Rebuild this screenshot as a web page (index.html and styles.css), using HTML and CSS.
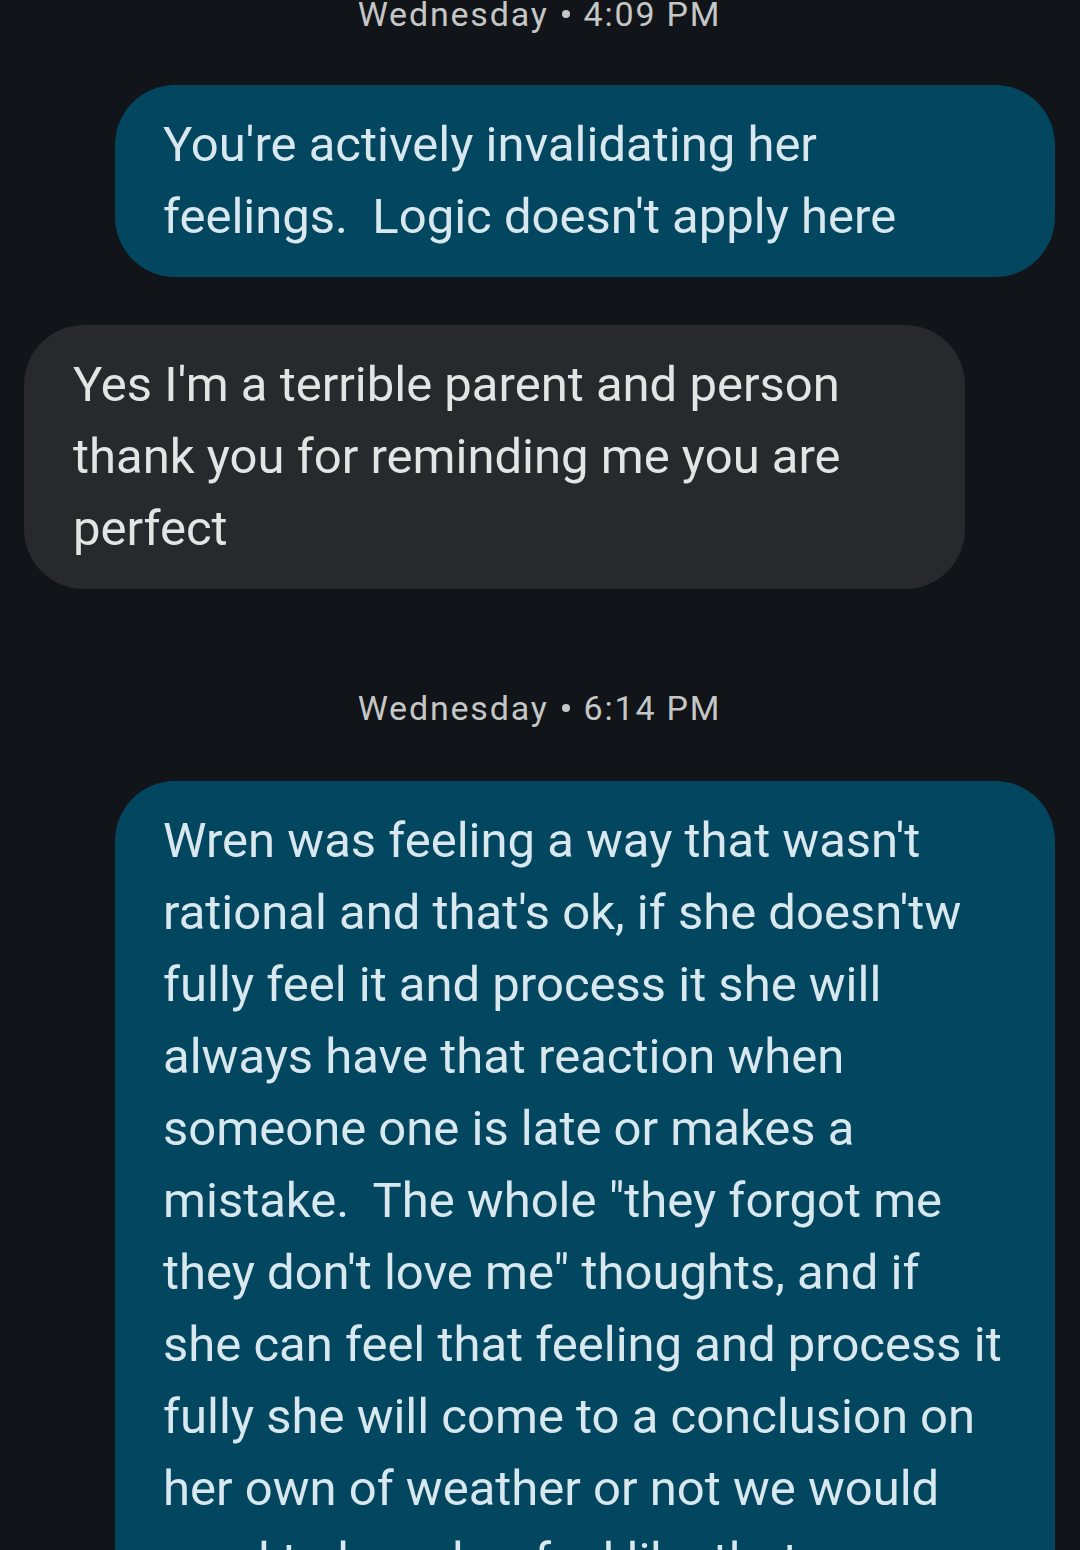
FILE: index.html
```html
<!DOCTYPE html>
<html lang="en">
<head>
<meta charset="utf-8">
<title>Messages</title>
<link rel="stylesheet" href="styles.css">
</head>
<body>
<main class="thread">
  <div class="stamp stamp-top">Wednesday<span class="dot"></span>4:09 PM</div>
  <div class="row sent">
    <div class="bubble out">You're actively invalidating her<br>feelings.&nbsp; Logic doesn't apply here</div>
  </div>
  <div class="row recv">
    <div class="bubble in">Yes I'm a terrible parent and person<br>thank you for reminding me you are<br>perfect</div>
  </div>
  <div class="stamp">Wednesday<span class="dot"></span>6:14 PM</div>
  <div class="row sent">
    <div class="bubble out">Wren was feeling a way that wasn't<br>rational and that's ok, if she doesn'tw<br>fully feel it and process it she will<br>always have that reaction when<br>someone one is late or makes a<br>mistake.&nbsp; The whole "they forgot me<br>they don't love me" thoughts, and if<br>she can feel that feeling and process it<br>fully she will come to a conclusion on<br>her own of weather or not we would<br>need to have her feel like that</div>
  </div>
</main>
</body>
</html>
```
FILE: styles.css
```css
html, body {
  margin: 0;
  padding: 0;
  background: #111418;
  height: 1550px;
  overflow: hidden;
}
body {
  font-family: Roboto, "Noto Sans", sans-serif;
}
.thread {
  display: flex;
  flex-direction: column;
  padding: 0 25px 0 24px;
}
.stamp {
  color: #c4c7c5;
  font-size: 34px;
  letter-spacing: 1.8px;
  line-height: 48px;
  text-align: center;
  margin: 95px 0 49px;
}
.stamp-top {
  margin: -10px 0 47px;
}
.dot {
  display: inline-block;
  width: 8px;
  height: 8px;
  border-radius: 50%;
  background: #c4c7c5;
  margin: 0 14px 0 13px;
  vertical-align: 8px;
}
.row {
  display: flex;
}
.row.sent {
  justify-content: flex-end;
}
.row.recv {
  justify-content: flex-start;
  margin-top: 48px;
}
.bubble {
  box-sizing: border-box;
  width: 940px;
  padding: 24px 48px;
  font-size: 49px;
  line-height: 72px;
  border-radius: 60px;
  white-space: nowrap;
}
.bubble.out {
  background: #02475f;
  color: #d9e8ef;
}
.bubble.in {
  background: #28292d;
  color: #e4e4e4;
  width: 941px;
  padding-left: 49px;
}
```
